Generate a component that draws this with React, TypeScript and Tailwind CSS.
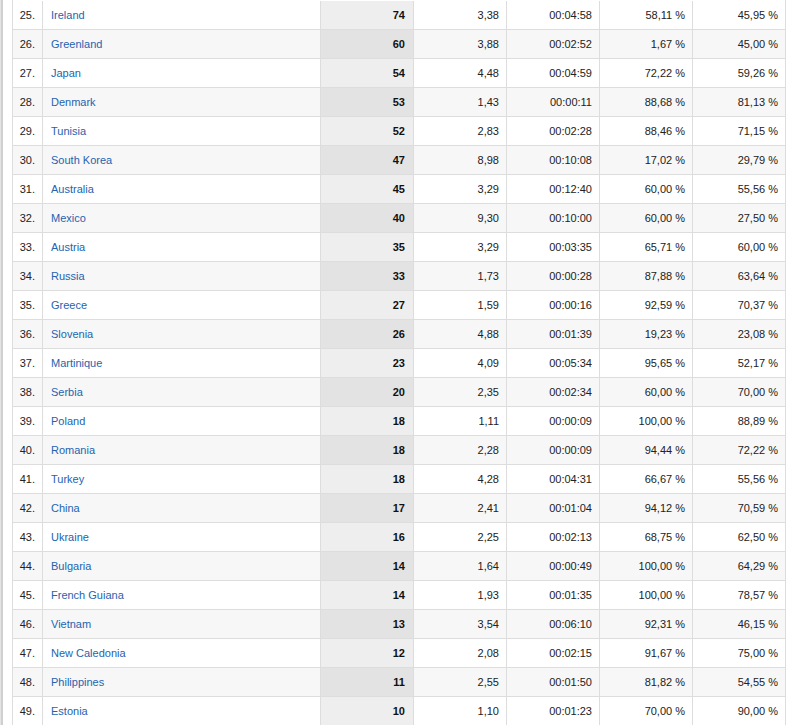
const rows: [number, string, number, string, string, string, string][] = [
  [25, 'Ireland', 74, '3,38', '00:04:58', '58,11 %', '45,95 %'],
  [26, 'Greenland', 60, '3,88', '00:02:52', '1,67 %', '45,00 %'],
  [27, 'Japan', 54, '4,48', '00:04:59', '72,22 %', '59,26 %'],
  [28, 'Denmark', 53, '1,43', '00:00:11', '88,68 %', '81,13 %'],
  [29, 'Tunisia', 52, '2,83', '00:02:28', '88,46 %', '71,15 %'],
  [30, 'South Korea', 47, '8,98', '00:10:08', '17,02 %', '29,79 %'],
  [31, 'Australia', 45, '3,29', '00:12:40', '60,00 %', '55,56 %'],
  [32, 'Mexico', 40, '9,30', '00:10:00', '60,00 %', '27,50 %'],
  [33, 'Austria', 35, '3,29', '00:03:35', '65,71 %', '60,00 %'],
  [34, 'Russia', 33, '1,73', '00:00:28', '87,88 %', '63,64 %'],
  [35, 'Greece', 27, '1,59', '00:00:16', '92,59 %', '70,37 %'],
  [36, 'Slovenia', 26, '4,88', '00:01:39', '19,23 %', '23,08 %'],
  [37, 'Martinique', 23, '4,09', '00:05:34', '95,65 %', '52,17 %'],
  [38, 'Serbia', 20, '2,35', '00:02:34', '60,00 %', '70,00 %'],
  [39, 'Poland', 18, '1,11', '00:00:09', '100,00 %', '88,89 %'],
  [40, 'Romania', 18, '2,28', '00:00:09', '94,44 %', '72,22 %'],
  [41, 'Turkey', 18, '4,28', '00:04:31', '66,67 %', '55,56 %'],
  [42, 'China', 17, '2,41', '00:01:04', '94,12 %', '70,59 %'],
  [43, 'Ukraine', 16, '2,25', '00:02:13', '68,75 %', '62,50 %'],
  [44, 'Bulgaria', 14, '1,64', '00:00:49', '100,00 %', '64,29 %'],
  [45, 'French Guiana', 14, '1,93', '00:01:35', '100,00 %', '78,57 %'],
  [46, 'Vietnam', 13, '3,54', '00:06:10', '92,31 %', '46,15 %'],
  [47, 'New Caledonia', 12, '2,08', '00:02:15', '91,67 %', '75,00 %'],
  [48, 'Philippines', 11, '2,55', '00:01:50', '81,82 %', '54,55 %'],
  [49, 'Estonia', 10, '1,10', '00:01:23', '70,00 %', '90,00 %'],
]

function CountryRow({ row, shaded }: { row: (typeof rows)[number]; shaded: boolean }) {
  const [rank, country, visits, pages, duration, newVisits, bounce] = row
  return (
    <div
      className={`grid grid-cols-[29px_278px_93px_93px_93px_93px_93px] h-[29px] shrink-0 border-b border-[#dddddd] ${
        shaded ? 'bg-[#f7f7f7]' : 'bg-white'
      }`}
    >
      <div className="flex items-center justify-end pr-[7px] text-[#222222]">{rank}.</div>
      <div className="flex items-center pl-[8px] border-l border-[#dddddd]">
        <a className="text-[#2563b0] cursor-pointer">{country}</a>
      </div>
      {/* Sorted column gets a darker tint */}
      <div
        className={`flex items-center justify-end pr-[8px] border-l border-[#dddddd] font-bold text-[#111111] ${
          shaded ? 'bg-[#e3e3e3]' : 'bg-[#eeeeee]'
        }`}
      >
        {visits}
      </div>
      <div className="flex items-center justify-end pr-[7px] border-l border-[#dddddd] text-[#222222]">
        {pages}
      </div>
      <div className="flex items-center justify-end pr-[7px] border-l border-[#dddddd] text-[#222222]">
        {duration}
      </div>
      <div className="flex items-center justify-end pr-[7px] border-l border-[#dddddd] text-[#222222]">
        {newVisits}
      </div>
      <div className="flex items-center justify-end pr-[7px] border-l border-[#dddddd] text-[#222222]">
        {bounce}
      </div>
    </div>
  )
}

export default function App() {
  return (
    <div className="w-[797px] h-[725px] overflow-hidden bg-white flex font-['Liberation_Sans',Arial,sans-serif] text-[11px] leading-none">
      <div className="w-[3px] border-l border-[#e4e4e4] bg-[#d0d0d0] shrink-0" />
      <div className="ml-[9px] w-[774px] pt-px border-x border-[#dddddd] flex flex-col">
        {rows.map((r, i) => (
          <CountryRow key={r[0]} row={r} shaded={i % 2 === 1} />
        ))}
      </div>
    </div>
  )
}
